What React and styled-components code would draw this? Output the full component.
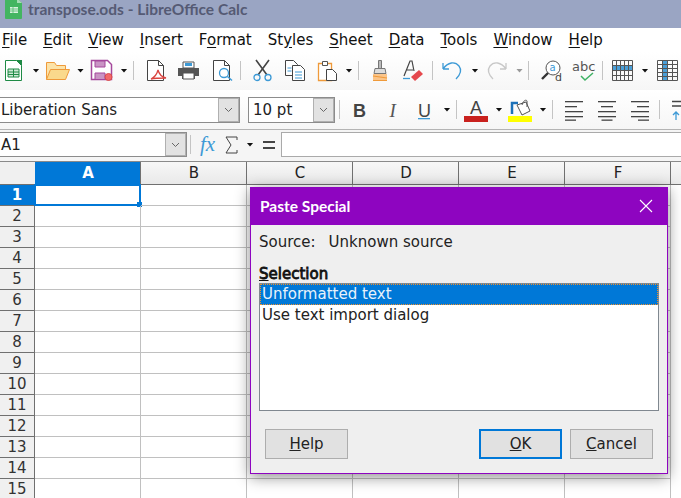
import styled, { createGlobalStyle } from "styled-components";

const GlobalStyle = createGlobalStyle`
  html, body {
    margin: 0;
    padding: 0;
    width: 681px;
    height: 498px;
    overflow: hidden;
    background: #fff;
    font-family: "DejaVu Sans", sans-serif;
  }
  * { box-sizing: border-box; }
`;

const Window = styled.div`
  position: relative;
  width: 681px;
  height: 498px;
  overflow: hidden;
  display: flex;
  flex-direction: column;
`;

const TitleBar = styled.div`
  height: 28px;
  flex: none;
  background: #9aa5c3;
  display: flex;
  align-items: flex-start;
  gap: 6px;
  padding-left: 5px;
  color: #555a74;
  font-family: "Lato", sans-serif;
  font-weight: 700;
  font-size: 15.5px;
  line-height: 19px;
`;

const MenuBar = styled.div`
  height: 24px;
  flex: none;
  background: #fff;
  display: flex;
  align-items: center;
  gap: 16px;
  padding-left: 2px;
  font-size: 15px;
  color: #111;
  u { text-underline-offset: 2px; }
`;

const Toolbar = styled.div`
  height: ${(p) => p.$h}px;
  flex: none;
  padding-bottom: ${(p) => p.$pb || 0}px;
  background: linear-gradient(#fff, #f6f6f6);
  display: flex;
  align-items: center;
  overflow: hidden;
`;

const Slot = styled.span`
  display: flex;
  flex: none;
  margin-left: ${(p) => p.$ml || 0}px;
  svg { overflow: visible; }
`;

const Arrow = styled.span`
  flex: none;
  width: 7px;
  height: 4px;
  margin-left: ${(p) => p.$ml || 0}px;
  background: ${(p) => (p.$off ? "#999" : "#111")};
  clip-path: polygon(0 0, 100% 0, 50% 100%);
`;

const Sep = styled.span`
  flex: none;
  width: 1px;
  height: 19px;
  margin-left: ${(p) => p.$ml || 0}px;
  background: #c4c4c4;
`;

const Combo = styled.div`
  flex: none;
  width: ${(p) => p.$w}px;
  height: ${(p) => p.$h || 26}px;
  margin-left: ${(p) => p.$ml || 0}px;
  display: flex;
  background: #fff;
  border: 1px solid #8c8c8c;
  border-left: ${(p) => (p.$flush ? "none" : "1px solid #8c8c8c")};
  font-size: 15px;
  color: #222;
`;

const ComboText = styled.span`
  flex: 1;
  padding-left: ${(p) => p.$pl || 1}px;
  line-height: 24px;
  white-space: nowrap;
`;

const ComboButton = styled.span`
  width: 21px;
  flex: none;
  background: #e2e2e2;
  border: 1px solid #b0b0b0;
  display: flex;
  align-items: center;
  justify-content: center;
`;

const FormulaBar = styled.div`
  height: 32px;
  flex: none;
  background: #f5f5f5;
  border-top: 1px solid #b4b4b4;
  display: flex;
  align-items: center;
  padding-bottom: 2px;
`;

const FormulaInput = styled.div`
  flex: 1;
  height: 25px;
  margin-left: 6px;
  background: #fff;
  border: 1px solid #aaa;
  border-right: none;
`;

const Sheet = styled.div`
  flex: 1;
  display: flex;
  flex-direction: column;
  border-top: 1px solid #8a8a8a;
  min-height: 0;
`;

const HeaderRow = styled.div`
  height: 23px;
  flex: none;
  display: flex;
  border-bottom: 1px solid #707070;
  background: linear-gradient(#f7f7f7, #e9e9e9);
`;

const Corner = styled.div`
  width: 35px;
  flex: none;
  background: #f0f0f0;
`;

const ColHead = styled.div`
  width: 106px;
  flex: none;
  display: flex;
  align-items: center;
  justify-content: center;
  padding-left: 1px;
  font-size: 15px;
  color: ${(p) => (p.$active ? "#fff" : "#222")};
  font-weight: ${(p) => (p.$active ? 700 : 400)};
  background: ${(p) => (p.$active ? "#0078d7" : "transparent")};
  border-right: 1px solid #707070;
`;

const Row = styled.div`
  height: 21px;
  flex: none;
  display: flex;
`;

const RowHead = styled.div`
  width: 35px;
  flex: none;
  display: flex;
  align-items: center;
  justify-content: center;
  font-size: 15px;
  color: ${(p) => (p.$active ? "#fff" : "#333")};
  font-weight: ${(p) => (p.$active ? 700 : 400)};
  background: ${(p) => (p.$active ? "#0078d7" : "#f0f0f0")};
  border-bottom: 1px solid #707070;
  border-right: 1px solid #707070;
`;

const Cell = styled.div`
  position: relative;
  width: 106px;
  flex: none;
  border-right: 1px solid #c0c0c0;
  border-bottom: 1px solid #c0c0c0;
`;

const CellCursor = styled.div`
  position: absolute;
  left: -1px;
  top: -1px;
  right: -1px;
  bottom: -1px;
  border: 2px solid #0078d7;
  &::after {
    content: "";
    position: absolute;
    right: -3px;
    bottom: -3px;
    width: 5px;
    height: 5px;
    background: #0078d7;
  }
`;

const Dialog = styled.div`
  position: absolute;
  left: 250px;
  top: 187px;
  width: 418px;
  height: 287px;
  display: flex;
  flex-direction: column;
  background: #efefef;
  border: 1px solid #8e05c0;
  box-shadow: 0 3px 14px rgba(0, 0, 0, 0.45);
`;

const DialogTitle = styled.div`
  height: 37px;
  flex: none;
  background: #8e05c0;
  color: #fff;
  display: flex;
  align-items: center;
  justify-content: space-between;
  padding: 0 14px 2px 9px;
  font-family: "Lato", sans-serif;
  font-weight: 700;
  font-size: 15.5px;
`;

const DialogBody = styled.div`
  flex: 1;
  display: flex;
  flex-direction: column;
  padding: 7px 8px 14px 8px;
  font-size: 15px;
  color: #222;
`;

const SourceLine = styled.div`
  display: flex;
  gap: 13px;
  height: 20px;
  align-items: center;
`;

const SectionLabel = styled.div`
  margin-top: 12px;
  height: 19px;
  line-height: 20px;
  color: #111;
  -webkit-text-stroke: 0.8px #111;
`;

const ListBox = styled.div`
  height: 128px;
  background: #fff;
  border: 1px solid #808890;
  display: flex;
  flex-direction: column;
`;

const ListItem = styled.div`
  height: 21px;
  padding-left: 1px;
  line-height: 19px;
  color: ${(p) => (p.$selected ? "#e8f2fb" : "#222")};
  background: ${(p) => (p.$selected ? "#0078d7" : "transparent")};
  border: 1px dotted ${(p) => (p.$selected ? "#f0902a" : "transparent")};
`;

const ButtonRow = styled.div`
  margin-top: auto;
  display: flex;
  gap: 8px;
  padding: 0 6px 0 6px;
`;

const DialogButton = styled.div`
  width: 83px;
  height: 30px;
  display: flex;
  align-items: center;
  justify-content: center;
  background: #e1e1e1;
  border: ${(p) => (p.$primary ? "2px solid #0078d7" : "1px solid #adadad")};
  margin-left: ${(p) => (p.$push ? "auto" : "0")};
`;

const Icon = ({ w, h, ml, children }) => (
  <Slot $ml={ml}>
    <svg width={w} height={h} viewBox={`0 0 ${w} ${h}`} fill="none">
      {children}
    </svg>
  </Slot>
);

const ChevronDown = () => (
  <svg width="9" height="6" viewBox="0 0 9 6" fill="none">
    <path d="M1 1l3.500 3.500L8 1" stroke="#666" />
  </svg>
);

const AlignIcon = ({ ml, kind }) => {
  const lines = [
    [18, 2],
    [12, 7],
    [18, 12],
    [18, 17],
    [11, 20.5],
  ];
  const x = (len) => (kind === "left" ? 0 : kind === "right" ? 18 - len : (18 - len) / 2);
  return (
    <Icon w={18} h={22} ml={ml}>
      {lines.map(([len, y]) => (
        <rect key={y} x={x(len)} y={y} width={len} height="1.300" fill="#444" />
      ))}
    </Icon>
  );
};

// grid icon, the highlighted band is a row or a column
const TableIcon = ({ ml, column }) => (
  <Icon w={21} h={21} ml={ml}>
    {column ? (
      <rect x="6" y="1" width="5" height="19" fill="#4a9fd8" />
    ) : (
      <rect x="1" y="5" width="19" height="5" fill="#4a9fd8" />
    )}
    <path
      d={
        column
          ? "M.5.5h20v20H.5zM5.500.5v20M10.500.5v20M15.500.5v20M.5 4.500h20M.5 8.500h20M.5 12.500h20M.5 16.500h20"
          : "M.5.5h20v20H.5zM4.500.5v20M8.500.5v20M12.500.5v20M16.500.5v20M.5 5.500h20M.5 10.500h20M.5 15.500h20"
      }
      stroke="#555"
    />
  </Icon>
);

const rows = Array.from({ length: 15 }, (_, i) => i + 1);
const columns = ["A", "B", "C", "D", "E", "F"];

export default function App() {
  return (
    <Window>
      <GlobalStyle />
      <TitleBar>
        <svg width="17" height="19" viewBox="0 2 17 19">
          <path d="M1 0h11l5 5v15a1 1 0 01-1 1H1a1 1 0 01-1-1V1a1 1 0 011-1z" fill="#43b561" />
          <path d="M12 0l5 5h-5z" fill="#a5dcb4" />
          <path d="M5 9h8v6H5z" fill="#d9f2df" />
          <path d="M5 11h8M5 13h8M8 9v6" stroke="#43b561" strokeWidth=".7" />
        </svg>
        transpose.ods - LibreOffice Calc
      </TitleBar>

      <MenuBar>
        <span><u>F</u>ile</span>
        <span><u>E</u>dit</span>
        <span><u>V</u>iew</span>
        <span><u>I</u>nsert</span>
        <span>F<u>o</u>rmat</span>
        <span>St<u>y</u>les</span>
        <span><u>S</u>heet</span>
        <span><u>D</u>ata</span>
        <span><u>T</u>ools</span>
        <span><u>W</u>indow</span>
        <span><u>H</u>elp</span>
      </MenuBar>

      <Toolbar $h={38} $pb={1}>
        <Icon w={17} h={21} ml={5}>
          <path d="M.5.500h11l5 5v15H.5z" fill="#fff" stroke="#1e8a45" />
          <path d="M11 0h6v6z" fill="#1e8a45" />
          <path d="M3 9h11v8H3z" fill="#cfe9d6" stroke="#1e8a45" />
          <path d="M3 12h11M3 14.500h11M8.500 9v8" stroke="#1e8a45" />
        </Icon>
        <Arrow $ml={10.5} />
        <Icon w={24} h={20} ml={6.5}>
          <path d="M.5 18.500V1.500h8l2 3h9v4" fill="#fce3a8" stroke="#ef9a3a" />
          <path d="M.5 18.500l4-10h19l-4 10z" fill="#fad98c" stroke="#ef9a3a" />
        </Icon>
        <Arrow $ml={7} />
        <Icon w={23} h={21} ml={7}>
          <path d="M.5.500h16l4 4v15H.5z" fill="#fff" stroke="#a5489c" strokeWidth="1.500" />
          <path d="M4 1h10v6H4z" fill="#c994c4" stroke="#a5489c" />
          <path d="M4 19v-6h10v6" fill="#c994c4" stroke="#a5489c" />
          <circle cx="17.500" cy="17" r="3.500" fill="#f2686a" stroke="#d84a4a" />
        </Icon>
        <Arrow $ml={6.5} />
        <Sep $ml={5.5} />
        <Icon w={20} h={21} ml={13}>
          <path d="M.5.500h11l5 5v15H.5zM11.500.500v5h5" fill="#fff" stroke="#444" />
          <path d="M19 18c-4-1-7-4-8-8-1 4-3 7-7 9 4-1 9-1 15-1z" stroke="#d9433f" strokeWidth="1.300" />
        </Icon>
        <Icon w={21} h={19} ml={11}>
          <path d="M5 1h11v6H5z" fill="#fff" stroke="#555" />
          <path d="M7 2h7v3H7z" fill="#3d9ad6" />
          <path d="M0 7h21v8h-4v3H4v-3H0z" fill="#555" />
          <path d="M5 12h11v6H5z" fill="#fff" stroke="#555" />
        </Icon>
        <Icon w={20} h={21} ml={14}>
          <path d="M.5.500h11l5 5v15H.5zM11.500.500v5h5" fill="#fff" stroke="#444" />
          <circle cx="11" cy="13" r="4.500" fill="#fff" stroke="#3d9ad6" strokeWidth="1.300" />
          <path d="M14.500 16.500l4.500 4" stroke="#3d9ad6" strokeWidth="1.500" />
        </Icon>
        <Sep $ml={7} />
        <Icon w={19} h={21} ml={12}>
          <path d="M3 0l11 15M16 0L5 15" stroke="#444" strokeWidth="1.600" />
          <circle cx="4" cy="17.500" r="3" stroke="#3d9ad6" strokeWidth="1.300" />
          <circle cx="15" cy="17.500" r="3" stroke="#3d9ad6" strokeWidth="1.300" />
        </Icon>
        <Icon w={20} h={21} ml={13}>
          <path d="M.5.500h8l4 4v11H.5z" fill="#fff" stroke="#444" />
          <path d="M7.500 5.500h8l4 4v11h-12z" fill="#fff" stroke="#444" />
          <path d="M2.500 8h4M2.500 11h4M10 12h7M10 15h7M10 18h7" stroke="#3d9ad6" />
        </Icon>
        <Icon w={19} h={21} ml={13}>
          <path d="M.5 3.500h13v17H.5z" fill="#fff" stroke="#ef9a3a" strokeWidth="1.300" />
          <path d="M4.500 1.500h5v4h-5z" fill="#fff" stroke="#555" />
          <path d="M8.500 9.500h6l4 4v7h-10z" fill="#fff" stroke="#444" />
        </Icon>
        <Arrow $ml={8.5} />
        <Sep $ml={5.5} />
        <Icon w={16} h={21} ml={13}>
          <path d="M6.500 .5h3v8h-3z" fill="#bbb" stroke="#777" />
          <path d="M3 8.500h10l1 5H2z" fill="#ddd" stroke="#777" />
          <path d="M1 14h14v7H1z" fill="#fbc58a" />
          <path d="M1 16l14 2M1 20.500h14" stroke="#ef9a3a" strokeWidth="1.200" />
        </Icon>
        <Icon w={20} h={21} ml={15}>
          <path d="M1 16L7 1h2l2 10M4 10h6" stroke="#444" strokeWidth="1.200" />
          <path d="M0 18.500h7" stroke="#3d9ad6" strokeWidth="1.300" />
          <path d="M8 17l8-7 4 4-8 7z" fill="#e5484d" />
        </Icon>
        <Sep $ml={9} />
        <Icon w={20} h={19} ml={9}>
          <path d="M1 8h6M1 8V2M1 8c5-7 12-8 16-3 3 4 1 9-3 13" stroke="#3d9ad6" strokeWidth="1.300" />
        </Icon>
        <Arrow $ml={9.5} />
        <Icon w={20} h={19} ml={8.5}>
          <path d="M19 8h-6M19 8V2M19 8c-5-7-12-8-16-3-3 4-1 9 3 13" stroke="#c8c8c8" strokeWidth="1.300" />
        </Icon>
        <Arrow $ml={9} $off />
        <Sep $ml={5} />
        <Icon w={22} h={22} ml={11}>
          <circle cx="13" cy="8" r="7" fill="#fff" stroke="#555" />
          <path d="M8 13l-6 6" stroke="#333" strokeWidth="2.400" />
          <text x="9.500" y="11" fontSize="10" fill="#3d9ad6" fontFamily="DejaVu Sans">a</text>
          <text x="15" y="21" fontSize="11" fill="#444" fontFamily="DejaVu Sans">d</text>
        </Icon>
        <Icon w={24} h={22} ml={10}>
          <text x="0" y="11" fontSize="13" fill="#555" fontFamily="DejaVu Sans">abc</text>
          <path d="M9 16l4 4 8-7" stroke="#3fb265" strokeWidth="1.500" />
        </Icon>
        <Sep $ml={6} />
        <TableIcon ml={9} />
        <Arrow $ml={8.5} />
        <TableIcon ml={8.5} column />
      </Toolbar>

      <Toolbar $h={39}>
        <Combo $w={240} $flush>
          <ComboText>Liberation Sans</ComboText>
          <ComboButton><ChevronDown /></ComboButton>
        </Combo>
        <Combo $w={87} $ml={8}>
          <ComboText $pl={4}>10 pt</ComboText>
          <ComboButton><ChevronDown /></ComboButton>
        </Combo>
        <Sep $ml={4} />
        <Icon w={14} h={25} ml={13}>
          <text x="0" y="20" fontSize="18" fontWeight="700" fill="#444" fontFamily="Liberation Sans">B</text>
        </Icon>
        <Icon w={9} h={25} ml={22}>
          <text x="0.500" y="20" fontSize="19" fontStyle="italic" fill="#555" fontFamily="Liberation Serif">I</text>
        </Icon>
        <Icon w={13} h={25} ml={20}>
          <text x="0" y="19.500" fontSize="18" fill="#444" fontFamily="Liberation Sans">U</text>
          <rect y="21" width="12" height="1.300" fill="#3d9ad6" />
        </Icon>
        <Arrow $ml={12.5} />
        <Sep $ml={5.5} />
        <Icon w={24} h={25} ml={7}>
          <text x="6" y="17" fontSize="18" fill="#444" fontFamily="Liberation Sans">A</text>
          <rect y="19" width="24" height="6" fill="#c9211e" />
        </Icon>
        <Arrow $ml={7.5} />
        <Icon w={24} h={25} ml={5.5}>
          <path d="M4 17V6h6" stroke="#1c71b8" strokeWidth="2.500" />
          <path d="M9 8l9-3 4 9-8 4z" fill="#fff" stroke="#555" />
          <path d="M14 8c1-4 4-6 5-4v6" stroke="#555" />
          <rect y="19" width="24" height="6" fill="#ffff00" />
        </Icon>
        <Arrow $ml={7.5} />
        <Sep $ml={5.5} />
        <AlignIcon ml={12} kind="left" />
        <AlignIcon ml={15} kind="center" />
        <AlignIcon ml={15} kind="right" />
        <Sep $ml={10} />
        <Icon w={18} h={22} ml={12}>
          <path d="M0 2.500h18M0 7h18" stroke="#444" strokeWidth="1.300" />
          <path d="M4 21v-8M1 16l3-3 3 3" stroke="#3d9ad6" strokeWidth="1.300" />
        </Icon>
      </Toolbar>

      <FormulaBar>
        <Combo $w={187} $flush $h={25}>
          <ComboText>A1</ComboText>
          <ComboButton><ChevronDown /></ComboButton>
        </Combo>
        <Sep $ml={3} />
        <Icon w={17} h={20} ml={9}>
          <text x="0" y="16" fontSize="21" fontStyle="italic" fill="#3d9ad6" fontFamily="Liberation Serif">fx</text>
        </Icon>
        <Icon w={13} h={18} ml={8}>
          <path d="M12 4V1H1l5 8-5 8h11v-3" stroke="#444" />
        </Icon>
        <Arrow $ml={8.5} />
        <Icon w={12} h={10} ml={9.5}>
          <path d="M0 2h12M0 8h12" stroke="#444" strokeWidth="2" />
        </Icon>
        <FormulaInput />
      </FormulaBar>

      <Sheet>
        <HeaderRow>
          <Corner />
          {columns.map((c) => (
            <ColHead key={c} $active={c === "A"}>{c}</ColHead>
          ))}
        </HeaderRow>
        {rows.map((r) => (
          <Row key={r}>
            <RowHead $active={r === 1}>{r}</RowHead>
            {columns.map((c) => (
              <Cell key={c}>{r === 1 && c === "A" && <CellCursor />}</Cell>
            ))}
          </Row>
        ))}
      </Sheet>

      <Dialog>
        <DialogTitle>
          Paste Special
          <svg width="14" height="14" viewBox="0 0 14 14">
            <path d="M1 1l12 12M13 1L1 13" stroke="#fff" strokeWidth="1.100" />
          </svg>
        </DialogTitle>
        <DialogBody>
          <SourceLine>
            <span>Source:</span>
            <span>Unknown source</span>
          </SourceLine>
          <SectionLabel><u>S</u>election</SectionLabel>
          <ListBox>
            <ListItem $selected>Unformatted text</ListItem>
            <ListItem>Use text import dialog</ListItem>
          </ListBox>
          <ButtonRow>
            <DialogButton><span><u>H</u>elp</span></DialogButton>
            <DialogButton $primary $push><span><u>O</u>K</span></DialogButton>
            <DialogButton><span><u>C</u>ancel</span></DialogButton>
          </ButtonRow>
        </DialogBody>
      </Dialog>
    </Window>
  );
}
